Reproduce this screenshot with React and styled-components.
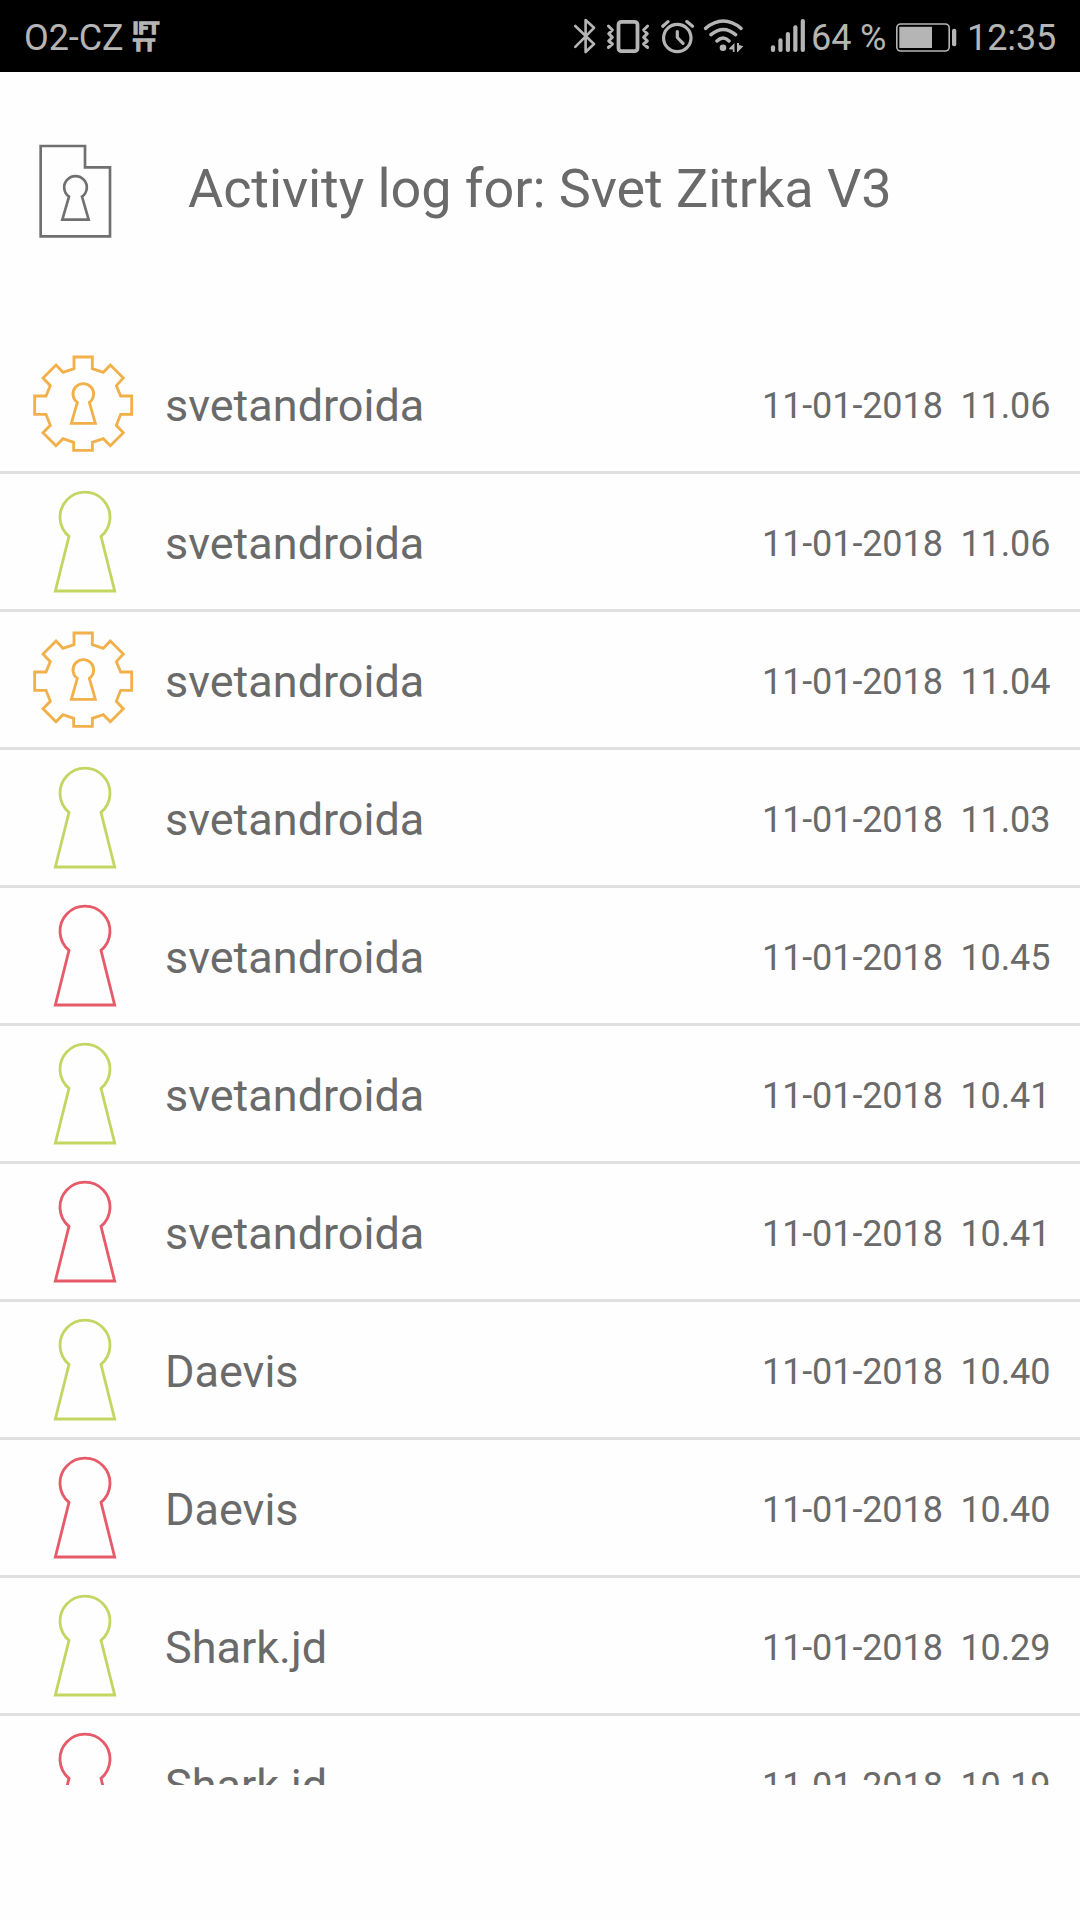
import React from 'react';
import styled, { createGlobalStyle } from 'styled-components';

const GlobalStyle = createGlobalStyle`
  body {
    margin: 0;
    background: #fefefe;
    font-family: Roboto, 'Noto Sans', sans-serif;
  }
`;

const Screen = styled.div`
  width: 1080px;
  height: 1920px;
  display: flex;
  flex-direction: column;
  overflow: hidden;
  background: #fefefe;
  color: #6a6a6a;
`;

const StatusBar = styled.header`
  box-sizing: border-box;
  height: 72px;
  flex-shrink: 0;
  padding: 0 24px;
  display: flex;
  align-items: center;
  justify-content: space-between;
  background: #000;
  color: #b5b5b5;
`;

const StatusGroup = styled.div`
  display: flex;
  align-items: center;
`;

const StatusText = styled.span`
  font-size: 36px;
  line-height: 42px;
  letter-spacing: -0.1px;
  white-space: pre;
  margin-top: 4px;
  width: ${props => props.$width}px;
  margin-right: ${props => props.$gap || 0}px;
`;

const Ifttt = styled.div`
  display: flex;
  flex-direction: column;
  font-size: 17px;
  font-weight: 900;
  line-height: 16.4px;
  letter-spacing: 0.5px;
  margin-top: 1px;
  -webkit-text-stroke: 1.3px #b5b5b5;
`;

const StatusIcon = styled.svg`
  display: block;
  height: 36px;
  width: ${props => props.$width}px;
  margin-right: ${props => props.$gap}px;
  fill: none;
  stroke: #b5b5b5;
  stroke-linecap: round;
  stroke-linejoin: round;

  .solid {
    fill: #b5b5b5;
    stroke: none;
  }
`;

const TitleBar = styled.div`
  height: 264px;
  flex-shrink: 0;
  box-sizing: border-box;
  display: flex;
  align-items: flex-start;
  padding: 72px 0 0 38px;
`;

const LockFile = styled.svg`
  display: block;
  width: 75px;
  height: 96px;
  margin-right: 75px;
  fill: none;
  stroke: #707070;
  stroke-width: 8;
`;

const Title = styled.h1`
  margin: 13px 0 0;
  font-size: 54px;
  font-weight: 400;
  line-height: 64px;
  letter-spacing: -0.08px;
  white-space: nowrap;
`;

const LogList = styled.ul`
  margin: 0;
  padding: 0;
  height: 1449px;
  overflow: hidden;
  list-style: none;
`;

const LogRow = styled.li`
  height: 135px;
  display: flex;
  align-items: center;
  border-bottom: 3px solid #e0dfe1;
`;

const EventIcon = styled.svg`
  display: block;
  flex-shrink: 0;
  width: 150px;
  height: 135px;
  fill: none;
  stroke: ${props => props.$color};
  stroke-width: 8.5;
`;

const UserName = styled.span`
  flex: 1;
  padding: 4px 0 0 15px;
  font-size: 45px;
  line-height: 54px;
`;

const Time = styled.time`
  width: 318px;
  padding-top: 5px;
  font-size: 36px;
  line-height: 42px;
  letter-spacing: -0.1px;
  white-space: pre;
`;

const COLORS = {
  settings: '#f2b04a',
  open: '#c3d563',
  denied: '#e65a69',
};

const LOGS = [
  { type: 'settings', user: 'svetandroida', time: '11.06' },
  { type: 'open', user: 'svetandroida', time: '11.06' },
  { type: 'settings', user: 'svetandroida', time: '11.04' },
  { type: 'open', user: 'svetandroida', time: '11.03' },
  { type: 'denied', user: 'svetandroida', time: '10.45' },
  { type: 'open', user: 'svetandroida', time: '10.41' },
  { type: 'denied', user: 'svetandroida', time: '10.41' },
  { type: 'open', user: 'Daevis', time: '10.40' },
  { type: 'denied', user: 'Daevis', time: '10.40' },
  { type: 'open', user: 'Shark.jd', time: '10.29' },
  { type: 'denied', user: 'Shark.jd', time: '10.19' },
];

function LogIcon({ type }) {
  if (type === 'settings') {
    return (
      <EventIcon $color={COLORS[type]} viewBox="-60 -12 450 405">
        <path d="M162 51H217V86L250 97L271 75L310 114L289 137L302 168H335V223H302L289 256L310 278L271 317L250 296L217 307V331H161V307L129 296L108 317L69 278L91 256L78 223H44V168H78L91 137L69 114L108 75L129 97L162 86Z" />
        <path d="M172 187A31 31 0 1 1 208 187L226 250H154Z" />
      </EventIcon>
    );
  }
  return (
    <EventIcon $color={COLORS[type]} viewBox="-60 12 450 405">
      <path d="M147 199A75 75 0 1 1 243 199L284 363H106Z" />
    </EventIcon>
  );
}

function StatusIcons() {
  return (
    <>
      {/* bluetooth */}
      <StatusIcon $width={22} $gap={10} viewBox="0 0 22 36" strokeWidth="2.6">
        <path d="M1.3 8L20 26L11.6 34V2L20 9.8L1.3 28.8" />
      </StatusIcon>
      {/* vibrate */}
      <StatusIcon $width={44} $gap={11} viewBox="0 0 44 36" strokeWidth="3">
        <rect x="12.5" y="3.8" width="19" height="29.4" rx="3" strokeWidth="3.8" />
        <path d="M2.4 8L6.4 12L2.7 15.7L6.4 19.3L2.7 23L6.4 26L2.4 29.5M41.6 8L37.6 12L41.3 15.7L37.6 19.3L41.3 23L37.6 26L41.6 29.5" />
      </StatusIcon>
      {/* alarm */}
      <StatusIcon $width={34} $gap={8} viewBox="0 0 34 36" strokeWidth="3.2">
        <circle cx="16.3" cy="20" r="13.7" />
        <path d="M16.3 13.5V19.5L22 25.4M1.8 8.2L7 3.6M25.8 3.6L31.5 8.2" />
      </StatusIcon>
      {/* wifi */}
      <StatusIcon $width={41} $gap={26} viewBox="0 0 41 36" strokeWidth="3.5">
        <path d="M2.6 10.3Q20.3 -4.2 38 10.3M8 16.7Q20.3 6.2 32.6 16.7M14 23Q20.3 17 26 23" />
        <circle className="solid" cx="20" cy="29.8" r="3.3" />
        <path className="solid" d="M26 30.5L31.5 25V34H29.8V31.5H26.5ZM34 25H36V27L40.3 28.3L34.8 34H34Z" />
      </StatusIcon>
      {/* signal */}
      <StatusIcon $width={36} $gap={5} viewBox="0 0 36 36">
        {[27.3, 20.3, 14, 7.3, 1].map((top, i) => (
          <rect key={top} className="solid" x={0.9 + i * 7.45} y={top} width="4.2" height={34 - top} rx="2" />
        ))}
      </StatusIcon>
    </>
  );
}

function App() {
  return (
    <>
      <GlobalStyle />
      <Screen>
        <StatusBar>
          <StatusGroup>
            <StatusText $width={100} $gap={9}>O2-CZ</StatusText>
            <Ifttt>
              <span>IFT</span>
              <span>TT</span>
            </Ifttt>
          </StatusGroup>
          <StatusGroup>
            <StatusIcons />
            <StatusText $width={76} $gap={9}>64 %</StatusText>
            <StatusIcon $width={61} $gap={10} viewBox="0 0 61 36" strokeWidth="1.6">
              <rect x="0.8" y="6" width="52.4" height="27" rx="4" />
              <rect className="solid" x="3.3" y="8.8" width="32.7" height="21.2" />
              <rect className="solid" x="56" y="10.7" width="4.3" height="17.6" rx="2" />
            </StatusIcon>
            <StatusText $width={89}>12:35</StatusText>
          </StatusGroup>
        </StatusBar>
        <TitleBar>
          <LockFile viewBox="54 42 225 288">
            <path d="M62 48H195V112H270V319H62Z" />
            <path d="M147 200A34 34 0 1 1 186 200L206 269H127Z" />
          </LockFile>
          <Title>Activity log for: Svet Zitrka V3</Title>
        </TitleBar>
        <LogList>
          {LOGS.map((log, i) => (
            <LogRow key={i}>
              <LogIcon type={log.type} />
              <UserName>{log.user}</UserName>
              <Time>{`11-01-2018  ${log.time}`}</Time>
            </LogRow>
          ))}
        </LogList>
      </Screen>
    </>
  );
}

export default App;
